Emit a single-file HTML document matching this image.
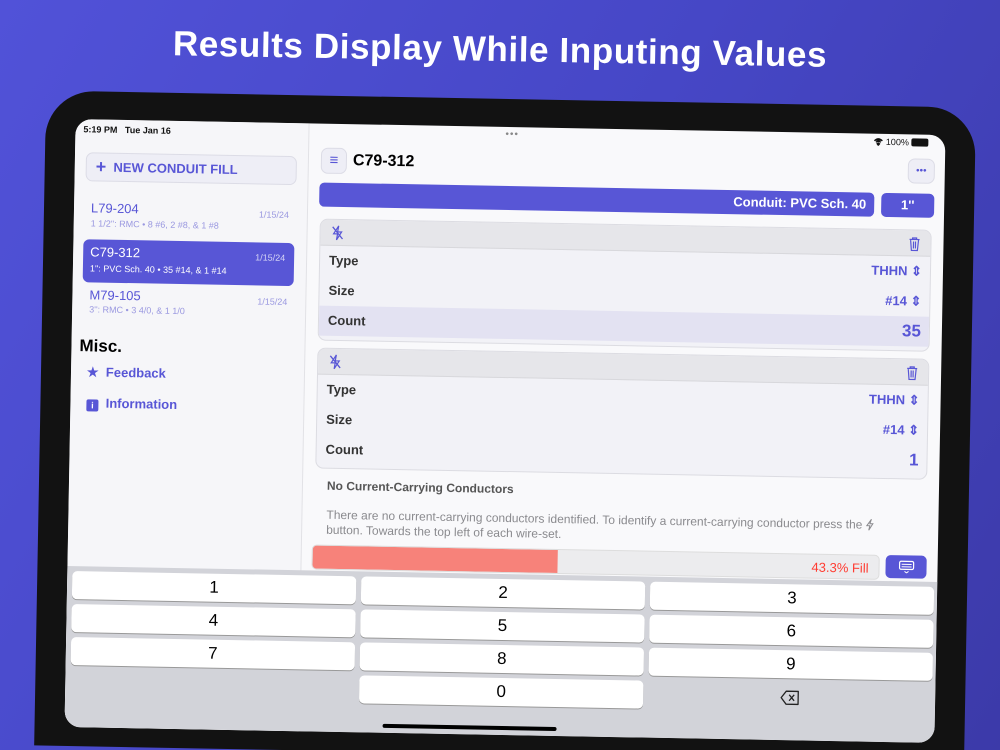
<!DOCTYPE html>
<html><head><meta charset="utf-8"><style>
*{box-sizing:border-box;margin:0;padding:0}
html,body{width:1000px;height:750px;overflow:hidden}
body{background:linear-gradient(120deg,#5152d8 0%,#4647c6 50%,#3c3aa9 100%);font-family:"Liberation Sans",sans-serif;position:relative}
.title{position:absolute;left:0;top:30px;width:1000px;text-align:center;color:#fff;font-weight:bold;font-size:35px;letter-spacing:0.6px;transform:rotate(1deg)}
.wrap{position:absolute;left:70px;top:127px;width:870px;height:608px;transform:rotate(1.05deg);transform-origin:50% 50%}
.frame{position:absolute;left:-30px;top:-28px;width:930px;height:655px;background:#121212;border-radius:48px 48px 0 0}
.screen{position:absolute;left:0;top:0;width:870px;height:608px;background:#f9f9fb;border-radius:16px;overflow:hidden}
.side{position:absolute;left:0;top:0;width:234px;height:608px;background:#f6f6f9;border-right:1px solid #e2e2e6}
.abs{position:absolute}
.pur{color:#5856d6}
.btn{background:#eeeef6;border:1px solid #dcdce6;border-radius:7px}
.card{position:absolute;left:246px;width:612px;background:#f2f2f7;border:1px solid #dcdce2;border-radius:8px;overflow:hidden}
.card .hd{height:26px;background:#e6e6ea;border-bottom:1px solid #d8d8dc;position:relative}
.row{height:30px;position:relative;font-size:13px;font-weight:bold;color:#333}
.row .l{position:absolute;left:9px;top:7px}
.row .v{position:absolute;right:8px;top:7px;color:#5856d6;font-size:13px}
.key{position:absolute;width:284px;height:28px;background:#fff;border-radius:5px;box-shadow:0 1px 0 #999;text-align:center;font-size:17px;line-height:28px;color:#000}
</style></head><body>
<div class="title">Results Display While Inputing Values</div>
<div class="wrap">
<div class="frame"></div>
<div class="screen">
 <div class="side">
  <div class="abs" style="left:8px;top:5px;font-size:9px;font-weight:bold;color:#111">5:19 PM&nbsp;&nbsp; Tue Jan 16</div>
  <div class="abs btn" style="left:11px;top:33px;width:211px;height:29px;font-size:13px;font-weight:bold;color:#5856d6;line-height:27px;padding-left:9px"><span style="font-size:18px;vertical-align:-1px">+</span>&nbsp; NEW CONDUIT FILL</div>
  <div class="abs pur" style="left:17px;top:81px;font-size:13px">L79-204</div>
  <div class="abs" style="left:185px;top:87px;font-size:9px;color:#9a98e0">1/15/24</div>
  <div class="abs" style="left:17px;top:99px;font-size:9px;color:#9a98e0">1 1/2'': RMC • 8 #6, 2 #8, &amp; 1 #8</div>
  <div class="abs" style="left:10px;top:120px;width:211px;height:43px;background:#5856d6;border-radius:6px;color:#fff">
   <div class="abs" style="left:7px;top:5px;font-size:13px">C79-312</div>
   <div class="abs" style="left:172px;top:10px;font-size:9px;color:#d6d5f5">1/15/24</div>
   <div class="abs" style="left:7px;top:24px;font-size:9px">1'': PVC Sch. 40 • 35 #14, &amp; 1 #14</div>
  </div>
  <div class="abs pur" style="left:17px;top:168px;font-size:13px">M79-105</div>
  <div class="abs" style="left:185px;top:174px;font-size:9px;color:#9a98e0">1/15/24</div>
  <div class="abs" style="left:17px;top:185px;font-size:9px;color:#9a98e0">3'': RMC • 3 4/0, &amp; 1 1/0</div>
  <div class="abs" style="left:8px;top:217px;font-size:17px;font-weight:bold;color:#000">Misc.</div>
  <div class="abs pur" style="left:16px;top:245px;font-size:13px;font-weight:bold">★&nbsp; Feedback</div>
  <div class="abs pur" style="left:16px;top:276px;font-size:13px;font-weight:bold"><span style="display:inline-block;width:12px;height:12px;background:#5856d6;color:#fff;font-size:9px;text-align:center;line-height:12px;border-radius:2px;vertical-align:-1px">i</span>&nbsp; Information</div>
 </div>
 <div class="abs" style="left:430px;top:2px;font-size:10px;color:#888;letter-spacing:1px">•••</div>
 <div class="abs" style="left:798px;top:3px;font-size:9px;color:#111">
  <svg width="10" height="8" viewBox="0 0 10 8" style="vertical-align:-1px"><path d="M1 3Q5 -1 9 3M2.5 4.5Q5 2 7.5 4.5M5 7.5L3.8 6Q5 5 6.2 6Z" stroke="#111" stroke-width="1.3" fill="#111"/></svg> 100% <span style="display:inline-block;width:17px;height:8px;background:#111;border-radius:2px;vertical-align:-1px"></span></div>
 <div class="abs btn" style="left:246px;top:24px;width:26px;height:26px;text-align:center;color:#5856d6;font-size:15px;line-height:24px">≡</div>
 <div class="abs" style="left:278px;top:28px;font-size:16px;font-weight:bold;color:#000">C79-312</div>
 <div class="abs btn" style="left:833px;top:24px;width:27px;height:25px;text-align:center;color:#5856d6;font-size:10px;line-height:23px">•••</div>
 <div class="abs" style="left:245px;top:59px;width:555px;height:24px;background:#5856d6;border-radius:5px;color:#fff;font-size:13px;font-weight:bold;text-align:right;padding-right:8px;line-height:24px">Conduit: PVC Sch. 40</div>
 <div class="abs" style="left:807px;top:59px;width:53px;height:24px;background:#5856d6;border-radius:5px;color:#fff;font-size:13px;font-weight:bold;text-align:center;line-height:24px">1''</div>

 <div class="card" style="top:95px;height:122px">
  <div class="hd">
   <svg class="abs" style="left:10px;top:5px" width="14" height="16" viewBox="0 0 14 16"><path d="M8 1L3 9H7L6 15L11 7H7Z" fill="none" stroke="#5856d6" stroke-width="1.2"/><path d="M2 2L12 14" stroke="#5856d6" stroke-width="1.3"/></svg>
   <svg class="abs" style="right:10px;top:6px" width="12" height="15" viewBox="0 0 12 15"><path d="M1 3H11M4 3V1.5H8V3M2 3L3 14H9L10 3M5 5V12M7 5V12" fill="none" stroke="#5856d6" stroke-width="1.2"/></svg>
  </div>
  <div class="row"><span class="l">Type</span><span class="v">THHN ⇕</span></div>
  <div class="row"><span class="l">Size</span><span class="v">#14 ⇕</span></div>
  <div class="row" style="background:#e3e2f2"><span class="l">Count</span><span class="v" style="font-size:17px;top:5px">35</span></div>
 </div>
 <div class="card" style="top:224px;height:121px">
  <div class="hd">
   <svg class="abs" style="left:10px;top:5px" width="14" height="16" viewBox="0 0 14 16"><path d="M8 1L3 9H7L6 15L11 7H7Z" fill="none" stroke="#5856d6" stroke-width="1.2"/><path d="M2 2L12 14" stroke="#5856d6" stroke-width="1.3"/></svg>
   <svg class="abs" style="right:10px;top:6px" width="12" height="15" viewBox="0 0 12 15"><path d="M1 3H11M4 3V1.5H8V3M2 3L3 14H9L10 3M5 5V12M7 5V12" fill="none" stroke="#5856d6" stroke-width="1.2"/></svg>
  </div>
  <div class="row"><span class="l">Type</span><span class="v">THHN ⇕</span></div>
  <div class="row"><span class="l">Size</span><span class="v">#14 ⇕</span></div>
  <div class="row"><span class="l">Count</span><span class="v" style="font-size:17px;top:5px">1</span></div>
 </div>
 <div class="abs" style="left:258px;top:355px;font-size:12px;font-weight:bold;color:#555">No Current-Carrying Conductors</div>
 <div class="abs" style="left:258px;top:384px;width:568px;font-size:12px;line-height:15px;color:#8a8a8e">There are no current-carrying conductors identified. To identify a current-carrying conductor press the <svg width="9" height="12" viewBox="0 0 9 12" style="vertical-align:-2px"><path d="M6 0.5L1.5 7H4.5L3.5 11.5L7.5 5H4.5Z" fill="none" stroke="#8a8a8e" stroke-width="1"/></svg><br>button. Towards the top left of each wire-set.</div>
 <div class="abs" style="left:244px;top:421px;width:568px;height:25px;background:#ececee;border-radius:5px;overflow:hidden;border:1px solid #ddd">
  <div style="width:245px;height:100%;background:#f7827a"></div>
  <div class="abs" style="right:10px;top:5px;font-size:13px;color:#ff3b30">43.3% Fill</div>
 </div>
 <div class="abs" style="left:818px;top:421px;width:41px;height:23px;background:#5856d6;border-radius:5px;text-align:center;padding-top:5px">
  <svg width="16" height="13" viewBox="0 0 16 13"><rect x="1" y="1" width="14" height="8" rx="1.5" fill="none" stroke="#fff" stroke-width="1.2"/><path d="M3 4H13M3 6.5H13M6 11L8 12.5L10 11" stroke="#fff" stroke-width="1" fill="none"/></svg>
 </div>
 <div class="abs" style="left:0;top:447px;width:870px;height:161px;background:#d2d3d9">
  <div class="key" style="left:5px;top:5px">1</div>
  <div class="key" style="left:294px;top:5px">2</div>
  <div class="key" style="left:583px;top:5px">3</div>
  <div class="key" style="left:5px;top:38px">4</div>
  <div class="key" style="left:294px;top:38px">5</div>
  <div class="key" style="left:583px;top:38px">6</div>
  <div class="key" style="left:5px;top:71px">7</div>
  <div class="key" style="left:294px;top:71px">8</div>
  <div class="key" style="left:583px;top:71px">9</div>
  <div class="key" style="left:294px;top:104px">0</div>
  <svg class="abs" style="left:715px;top:111px" width="20" height="15" viewBox="0 0 20 15"><path d="M6 1H18V14H6L1 7.5Z" fill="none" stroke="#222" stroke-width="1.3" stroke-linejoin="round"/><path d="M9 4.5L14 10.5M14 4.5L9 10.5" stroke="#222" stroke-width="1.3"/></svg>
  <div class="abs" style="left:318px;top:152px;width:174px;height:4px;background:#000;border-radius:2px"></div>
 </div>
</div>
</div>
</body></html>
